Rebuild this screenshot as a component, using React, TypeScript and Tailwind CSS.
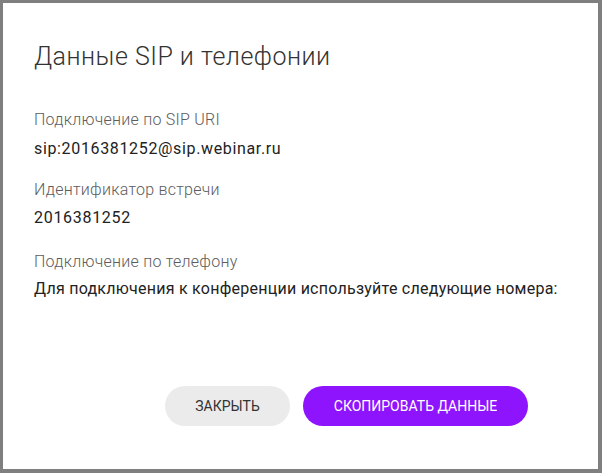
export default function App() {
  const font = { fontFamily: 'Roboto, "Noto Sans", sans-serif' };
  return (
    <div
      className="w-[602px] h-[473px] bg-white border-[#7f7f7f] border-l-[3px] border-t-[3px] border-r-[4px] border-b-[4px] flex flex-col"
      style={font}
    >
      <div className="pl-[31px] pt-[38px] flex flex-col">
        <h1 className="text-[25px] leading-[32px] font-light tracking-[0.5px] text-[#333333]">
          Данные SIP и телефонии
        </h1>
        <div className="mt-[37px] flex flex-col">
          <div className="text-[16px] leading-[20px] font-light tracking-[0.25px] text-[#5c5c5c]">Подключение по SIP URI</div>
          <div className="mt-[9px] text-[16px] leading-[20px] tracking-[0.65px] text-[#222222]">sip:2016381252@sip.webinar.ru</div>
        </div>
        <div className="mt-[21px] flex flex-col">
          <div className="text-[16px] leading-[20px] font-light tracking-[0.25px] text-[#5c5c5c]">Идентификатор встречи</div>
          <div className="mt-[8px] text-[16px] leading-[20px] tracking-[0.7px] text-[#222222]">2016381252</div>
        </div>
        <div className="mt-[24px] flex flex-col">
          <div className="text-[16px] leading-[20px] font-light tracking-[0.25px] text-[#5c5c5c]">Подключение по телефону</div>
          <div className="mt-[7px] text-[16px] leading-[20px] tracking-[0.25px] text-[#222222]">
            Для подключения к конференции используйте следующие номера:
          </div>
        </div>
      </div>
      <div className="mt-auto mb-[43px] flex justify-end pr-[70px] gap-[13px]">
        <button className="w-[125px] h-[40px] rounded-full bg-[#ebebeb] text-[#333333] text-[14px] uppercase">
          Закрыть
        </button>
        <button className="w-[225px] h-[40px] rounded-full bg-[#8f14fe] text-white text-[14px] uppercase">
          Скопировать данные
        </button>
      </div>
    </div>
  );
}
